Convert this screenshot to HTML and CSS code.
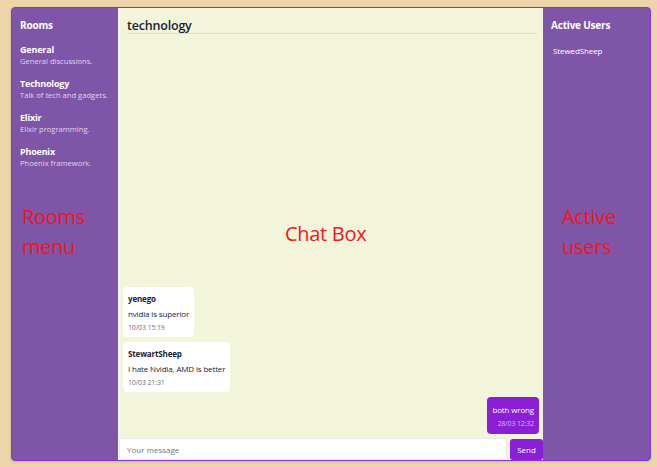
FILE: index.html
```html
<!DOCTYPE html>
<html>
<head>
<meta charset="utf-8">
<link rel="stylesheet" href="styles.css">
</head>
<body>
<div class="app">
  <aside class="rooms">
    <h2 class="side-title">Rooms</h2>
    <ul class="room-list">
      <li class="room"><div class="room-name">General</div><div class="room-desc">General discussions.</div></li>
      <li class="room"><div class="room-name">Technology</div><div class="room-desc">Talk of tech and gadgets.</div></li>
      <li class="room"><div class="room-name">Elixir</div><div class="room-desc">Elixir programming.</div></li>
      <li class="room"><div class="room-name">Phoenix</div><div class="room-desc">Phoenix framework.</div></li>
    </ul>
    <div class="label">Rooms<br>menu</div>
  </aside>
  <main class="chat">
    <h1 class="chat-title">technology</h1>
    <div class="messages">
      <div class="label chat-label">Chat Box</div>
      <div class="msg">
        <div class="msg-user">yenego</div>
        <div class="msg-text">nvidia is superior</div>
        <div class="msg-time">10/03 15:19</div>
      </div>
      <div class="msg">
        <div class="msg-user">StewartSheep</div>
        <div class="msg-text">I hate Nvidia, AMD is better</div>
        <div class="msg-time">10/03 21:31</div>
      </div>
      <div class="msg mine">
        <div class="msg-text">both wrong</div>
        <div class="msg-time">28/03 12:32</div>
      </div>
    </div>
    <form class="composer">
      <input class="composer-input" type="text" placeholder="Your message">
      <button class="send" type="button">Send</button>
    </form>
  </main>
  <aside class="users">
    <h2 class="side-title">Active Users</h2>
    <div class="user">StewedSheep</div>
    <div class="label">Active<br>users</div>
  </aside>
</div>
</body>
</html>
```
FILE: styles.css
```css
* { box-sizing: border-box; }
html, body { margin: 0; padding: 0; }
body {
  background: #eed5a9;
  font-family: "Open Sans", "Noto Sans", sans-serif;
  width: 657px;
  height: 467px;
  padding: 7px 6px 6px 11px;
}
.app {
  display: flex;
  width: 640px;
  height: 454px;
  border: 1px solid #8f2ee0;
  border-radius: 4px;
  overflow: hidden;
  background: #7f55a8;
  box-shadow: 0 1px 3px rgba(0,0,0,0.15);
}
.rooms {
  width: 106px;
  padding: 10px 8px;
  color: #fff;
  display: flex;
  flex-direction: column;
}
.users {
  width: 107px;
  padding: 10px 8px;
  color: #fff;
  display: flex;
  flex-direction: column;
}
.side-title {
  margin: 0;
  font-size: 10px;
  font-weight: 700;
  line-height: 14px;
  letter-spacing: -0.2px;
}
.room-list {
  list-style: none;
  margin: 11px 0 0;
  padding: 0;
  display: flex;
  flex-direction: column;
  gap: 10px;
}
.room-name {
  font-size: 9px;
  font-weight: 700;
  line-height: 13px;
  letter-spacing: -0.2px;
}
.room-desc {
  font-size: 7.6px;
  line-height: 11px;
  color: #e0d4ee;
}
.user {
  margin-top: 13px;
  padding-left: 2px;
  font-size: 8px;
  line-height: 11px;
  letter-spacing: -0.1px;
}
.label {
  color: #f0161c;
  font-size: 20px;
  line-height: 30px;
  font-family: "Open Sans", sans-serif;
  letter-spacing: -0.3px;
}
.rooms .label { margin-top: 33px; padding-left: 2px; }
.users .label { margin-top: 146px; padding-left: 11px; }
.chat {
  flex: 1;
  background: #f3f5db;
  border-left: 1px solid #f7f7f0;
  display: flex;
  flex-direction: column;
  position: relative;
}
.chat-title {
  margin: 10px 6px 0 8px;
  font-size: 12.5px;
  font-weight: 600;
  line-height: 15px;
  color: #1c2133;
  border-bottom: 1px solid #dcdcec;
  letter-spacing: -0.2px;
}
.messages {
  flex: 1;
  display: flex;
  flex-direction: column;
  justify-content: flex-end;
  align-items: flex-start;
  gap: 5px;
  padding: 0 4px 4px 4px;
}
.chat-label {
  position: absolute;
  left: 166px;
  top: 211px;
}
.msg {
  background: #fff;
  border-radius: 4px;
  padding: 6px 5px 4px 5px;
  color: #1c2133;
  letter-spacing: -0.15px;
}
.msg-user {
  font-size: 8px;
  font-weight: 700;
  line-height: 12px;
  margin-bottom: 3px;
}
.msg-text {
  font-size: 8px;
  line-height: 12px;
  margin-bottom: 2px;
}
.msg-time {
  font-size: 7px;
  line-height: 11px;
  color: #6a6f7d;
}
.msg.mine {
  align-self: flex-end;
  background: #8a1fd6;
  color: #fff;
  text-align: right;
  padding: 7px 5px 5px 5px;
}
.msg.mine .msg-time { color: #d2b8ef; }
.composer {
  display: flex;
  gap: 3px;
  margin: 0;
  height: 22px;
  align-items: stretch;
}
.composer-input {
  flex: 1;
  border: 1px solid #e8e8e8;
  border-radius: 2px;
  background: #fff;
  font: 8px "Open Sans", sans-serif;
  padding: 0 7px;
  margin: 0;
}
.composer-input::placeholder { color: #707482; }
.send {
  width: 33px;
  background: #8a1fd6;
  color: #fff;
  border: none;
  border-radius: 3px;
  font: 8px "Open Sans", sans-serif;
  padding: 0;
  margin: 1px 0 0;
}
```
